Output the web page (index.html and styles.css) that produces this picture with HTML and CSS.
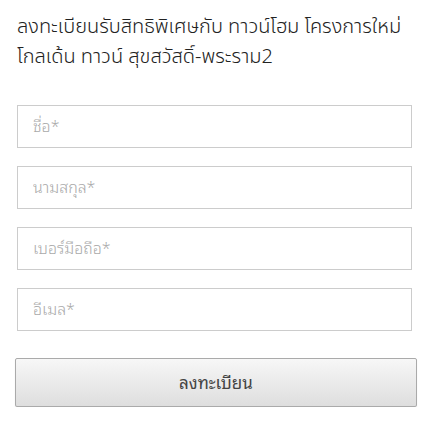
FILE: index.html
```html
<!DOCTYPE html>
<html lang="th">

<head>
    <meta charset="UTF-8">
    <meta name="viewport" content="width=device-width, initial-scale=1.0">
    <title>ลงทะเบียน</title>
    <link rel="stylesheet" href="styles.css">
</head>

<body>
    <div class="register">
        <h2 class="register-title">ลงทะเบียนรับสิทธิพิเศษกับ ทาวน์โฮม โครงการใหม่<br>โกลเด้น ทาวน์ สุขสวัสดิ์-พระราม2</h2>
        <form class="register-form">
            <input type="text" class="field" placeholder="ชื่อ*">
            <input type="text" class="field" placeholder="นามสกุล*">
            <input type="text" class="field" placeholder="เบอร์มือถือ*">
            <input type="text" class="field" placeholder="อีเมล*">
            <button type="button" class="btn-submit">ลงทะเบียน</button>
        </form>
    </div>
</body>

</html>
```

FILE: styles.css
```css
* {
    margin: 0;
    padding: 0;
    box-sizing: border-box;
}

body {
    background: #fff;
    font-family: "Noto Sans Thai Looped", "DejaVu Sans", sans-serif;
}

.register {
    padding: 12px 26px 0 17px;
}

.register-title {
    font-family: "Noto Sans Thai", "DejaVu Sans", sans-serif;
    font-size: 20px;
    font-weight: 300;
    line-height: 30px;
    color: #222;
    margin-bottom: 33px;
    white-space: nowrap;
}

.register-form {
    display: flex;
    flex-direction: column;
    gap: 18px;
}

.field {
    display: block;
    width: 395px;
    height: 43px;
    border: 1px solid #ccc;
    padding: 0 15px 3px;
    font-size: 16px;
    font-weight: 300;
    font-family: inherit;
    color: #555;
    outline: none;
}

.field::placeholder {
    color: #aaa;
}

.btn-submit {
    width: 402px;
    height: 49px;
    margin: 9px 0 0 -2px;
    padding-bottom: 3px;
    border: 1px solid #aaa;
    border-radius: 2px;
    background: linear-gradient(#f7f7f7, #dedede);
    box-shadow: 0 1px 1px rgba(0, 0, 0, 0.15);
    font-size: 17px;
    font-weight: 400;
    font-family: inherit;
    color: #444;
}
```
